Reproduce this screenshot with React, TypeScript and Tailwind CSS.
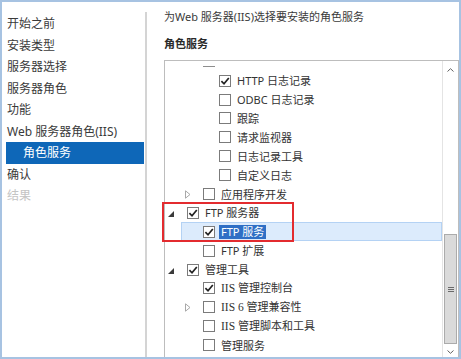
import React from "react";

type Row = {
  label: React.ReactNode;
  level: 1 | 2 | 3;
  checked?: boolean;
  expander?: "open" | "closed";
  selected?: boolean;
};

const NAV = [
  { label: "开始之前" },
  { label: "安装类型" },
  { label: "服务器选择" },
  { label: "服务器角色" },
  { label: "功能" },
  { label: "Web 服务器角色(IIS)" },
  { label: "角色服务", active: true },
  { label: "确认" },
  { label: "结果", disabled: true },
];

const Iis = ({ children }: { children: React.ReactNode }) => (
  <span className="font-[family-name:'Liberation_Serif',serif] text-[11.5px]">{children}</span>
);

const ROWS: Row[] = [
  { label: "HTTP 日志记录", level: 3, checked: true },
  { label: "ODBC 日志记录", level: 3 },
  { label: "跟踪", level: 3 },
  { label: "请求监视器", level: 3 },
  { label: "日志记录工具", level: 3 },
  { label: "自定义日志", level: 3 },
  { label: "应用程序开发", level: 2, expander: "closed" },
  { label: "FTP 服务器", level: 1, checked: true, expander: "open" },
  { label: "FTP 服务", level: 2, checked: true, selected: true },
  { label: "FTP 扩展", level: 2 },
  { label: "管理工具", level: 1, checked: true, expander: "open" },
  { label: <><Iis>IIS</Iis> 管理控制台</>, level: 2, checked: true },
  { label: <><Iis>IIS 6</Iis> 管理兼容性</>, level: 2, expander: "closed" },
  { label: <><Iis>IIS</Iis> 管理脚本和工具</>, level: 2 },
  { label: "管理服务", level: 2 },
];

const LEVEL_ML = { 1: "ml-0", 2: "ml-[16px]", 3: "ml-[32px]" };

function Checkbox({ checked }: { checked?: boolean }) {
  return (
    <div className="w-[12px] h-[12px] shrink-0 border border-[#7b7b7b] bg-white flex items-center justify-center">
      {checked && (
        <svg width="10" height="10" viewBox="0 0 10 10">
          <path d="M1.4 5.2 L4 7.8 L8.8 2" fill="none" stroke="#222" strokeWidth="1.7" />
        </svg>
      )}
    </div>
  );
}

function Expander({ kind }: { kind?: "open" | "closed" }) {
  if (kind === "open") {
    return (
      <svg width="6" height="6" viewBox="0 0 6 6" className="mt-[2px]">
        <path d="M6 0 L6 6 L0 6 Z" fill="#3a3a3a" />
      </svg>
    );
  }
  if (kind === "closed") {
    return (
      <svg width="6" height="9" viewBox="0 0 6 9" className="ml-[1px]">
        <path d="M0.5 0.8 L5 4.5 L0.5 8.2 Z" fill="none" stroke="#a8a8a8" strokeWidth="1" />
      </svg>
    );
  }
  return null;
}

function TreeRow({ row }: { row: Row }) {
  return (
    <div
      className={`${LEVEL_ML[row.level]} h-[18.9px] flex items-center ${
        row.selected ? "pl-[2px] bg-[#dcebfc] border border-[#b4d2f4]" : "pl-[3px]"
      }`}
    >
      <div className="w-[19px] shrink-0 flex items-center">
        <Expander kind={row.expander} />
      </div>
      <Checkbox checked={row.checked} />
      {row.selected ? (
        <span className="ml-[4px] px-[2px] h-[14px] flex items-center bg-[#2f6fc5] text-white text-[11px] leading-none whitespace-nowrap">
          {row.label}
        </span>
      ) : (
        <span className="ml-[6px] text-[11px] leading-none whitespace-nowrap">{row.label}</span>
      )}
    </div>
  );
}

export default function App() {
  return (
    <div className="relative w-[461px] h-[359px] overflow-hidden border-2 border-[#a7c3e2] bg-white flex font-[family-name:'Noto_Sans','Noto_Sans_CJK_SC',sans-serif] text-[#333333]">
      {/* Wizard steps */}
      <div className="w-[143px] shrink-0 pt-[11.25px] text-[12px]">
        {NAV.map((item) =>
          item.active ? (
            <div
              key={item.label}
              className="h-[21.5px] ml-[4px] mr-[1px] pl-[17px] flex items-center bg-[#0e67b8] text-white leading-none"
            >
              {item.label}
            </div>
          ) : (
            <div
              key={item.label}
              className={`h-[21.5px] pl-[5px] flex items-center leading-none whitespace-nowrap ${
                item.disabled ? "text-[#c4c4c4]" : "text-[#3a3a3a]"
              }`}
            >
              {item.label}
            </div>
          )
        )}
      </div>
      <div className="w-[2px] shrink-0 mt-[10px] bg-[#d4d4d4]" />

      {/* Content */}
      <div className="flex-1 min-w-0 flex flex-col pl-[17px] pt-[7px]">
        <div className="h-[16px] leading-[16px] text-[11px] whitespace-nowrap text-[#3a3a3a]">
          为Web 服务器(IIS)选择要安装的角色服务
        </div>
        <div className="mt-[11px] h-[16px] leading-[16px] text-[11px] font-bold text-[#2a2a2a]">角色服务</div>

        <div className="mt-[8px] flex-1 min-h-0 flex border-l border-t border-r border-[#bdbdbd] overflow-hidden">
          <div className="flex-1 min-w-0 flex flex-col">
            <div className="h-[6px] shrink-0 flex items-end pl-[38px]">
              <div className="w-[12px] h-px bg-[#8e8e8e]" />
            </div>
            <div className="mt-[4.25px] flex flex-col">
              {ROWS.map((row, i) => (
                <TreeRow key={i} row={row} />
              ))}
            </div>
          </div>

          {/* Scrollbar */}
          <div className="w-[16px] shrink-0 flex flex-col border-l border-[#e4e4e4] bg-white">
            <div className="h-[15px] shrink-0 flex items-center justify-center pt-[2px]">
              <svg width="7" height="4" viewBox="0 0 7 4">
                <path d="M0.5 3.5 L3.5 0.7 L6.5 3.5" fill="none" stroke="#606060" strokeWidth="1" />
              </svg>
            </div>
            <div className="h-[158px] shrink-0" />
            <div className="h-[110px] shrink-0 mx-[1px] bg-[#dadada] border border-[#ababab] flex flex-col items-center justify-center gap-[1px]">
              <div className="w-[6px] h-px bg-[#6a6a6a]" />
              <div className="w-[6px] h-px bg-[#6a6a6a]" />
              <div className="w-[6px] h-px bg-[#6a6a6a]" />
            </div>
            <div className="h-[15px] shrink-0 flex items-center justify-center">
              <svg width="7" height="4" viewBox="0 0 7 4">
                <path d="M0.5 0.5 L3.5 3.3 L6.5 0.5" fill="none" stroke="#606060" strokeWidth="1" />
              </svg>
            </div>
          </div>
        </div>
      </div>

      {/* Annotation */}
      <div className="absolute left-[160px] top-[200px] w-[132px] h-[40px] border-2 border-[#e32b2f]" />
    </div>
  );
}
